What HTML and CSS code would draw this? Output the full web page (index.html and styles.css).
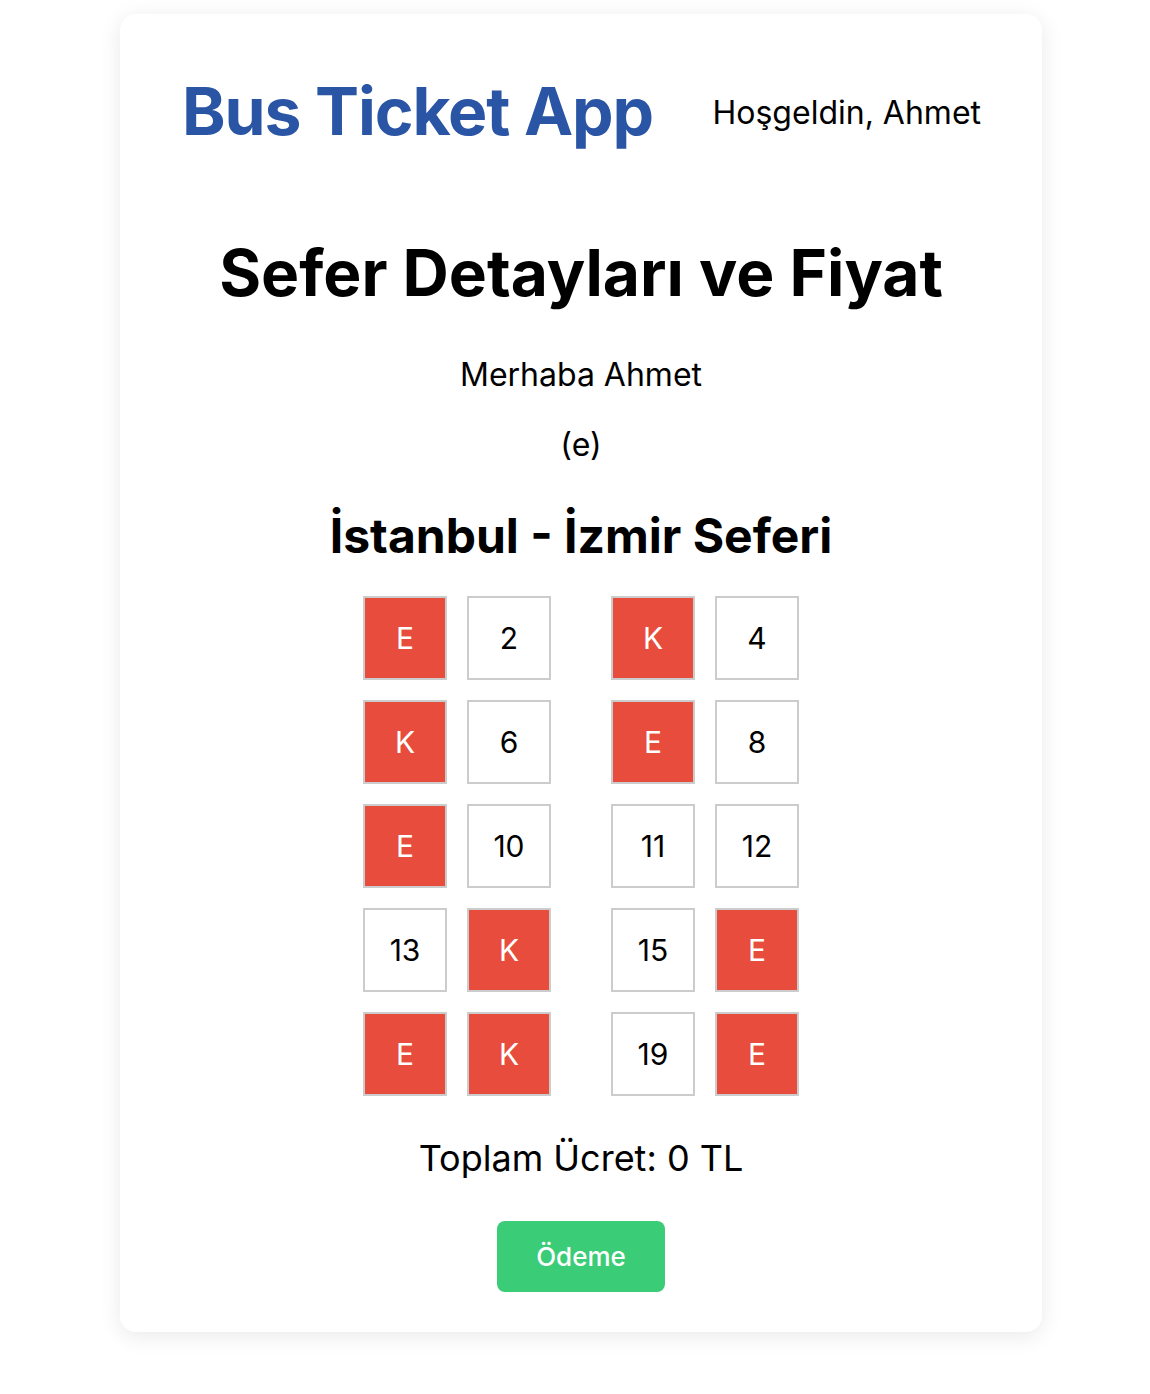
FILE: index.html
```html
<!DOCTYPE html>
<html lang="tr">
<head>
<meta charset="utf-8">
<title>Bus Ticket App</title>
<link rel="stylesheet" href="styles.css">
</head>
<body>
<div class="card">
  <header class="header">
    <h1 class="brand">Bus Ticket App</h1>
    <span class="greeting">Hoşgeldin, Ahmet</span>
  </header>
  <main class="content">
    <h2 class="page-title">Sefer Detayları ve Fiyat</h2>
    <p class="hello">Merhaba Ahmet</p>
    <p class="hello hello-e">(e)</p>
    <h3 class="route">İstanbul - İzmir Seferi</h3>
    <div class="seats">
      <div class="seat-row">
        <div class="seat taken">E</div><div class="seat">2</div><div class="aisle"></div><div class="seat taken">K</div><div class="seat">4</div>
      </div>
      <div class="seat-row">
        <div class="seat taken">K</div><div class="seat">6</div><div class="aisle"></div><div class="seat taken">E</div><div class="seat">8</div>
      </div>
      <div class="seat-row">
        <div class="seat taken">E</div><div class="seat">10</div><div class="aisle"></div><div class="seat">11</div><div class="seat">12</div>
      </div>
      <div class="seat-row">
        <div class="seat">13</div><div class="seat taken">K</div><div class="aisle"></div><div class="seat">15</div><div class="seat taken">E</div>
      </div>
      <div class="seat-row">
        <div class="seat taken">E</div><div class="seat taken">K</div><div class="aisle"></div><div class="seat">19</div><div class="seat taken">E</div>
      </div>
    </div>
    <p class="total">Toplam Ücret: 0 TL</p>
    <button class="pay">Ödeme</button>
  </main>
</div>
</body>
</html>
```

FILE: styles.css
```css
* { box-sizing: border-box; }

body {
  margin: 0;
  padding: 14px 0 40px 12px;
  background: #ffffff;
  font-family: Inter, "Noto Sans", "DejaVu Sans", sans-serif;
  color: #000;
}

.card {
  width: 922px;
  margin: 0 auto;
  background: #fff;
  border-radius: 16px;
  box-shadow: 0 4px 22px rgba(0, 0, 0, 0.09);
  padding: 58px 61px 40px 62px;
}

.header {
  display: flex;
  justify-content: space-between;
  align-items: center;
}

.brand {
  margin: 0;
  font-size: 66px;
  line-height: 1.2;
  font-weight: 700;
  color: #2a55a5;
  letter-spacing: -1.1px;
}

.greeting {
  font-size: 32px;
  line-height: 1.2;
  padding-top: 4px;
}

.content {
  display: flex;
  flex-direction: column;
  align-items: center;
  text-align: center;
  padding-right: 1px;
}

.page-title {
  margin: 84px 0 0;
  font-size: 64px;
  line-height: 1.2;
  font-weight: 700;
}

.hello {
  margin: 44px 0 0;
  font-size: 32px;
  line-height: 1.2;
}

.hello-e {
  margin-top: 32px;
}

.route {
  margin: 42px 0 0;
  font-size: 48px;
  line-height: 1.2;
  font-weight: 700;
}

.seats {
  margin-top: 32px;
  display: flex;
  flex-direction: column;
  gap: 20px;
}

.seat-row {
  display: flex;
  gap: 20px;
}

.aisle { width: 20px; }

.seat {
  width: 84px;
  height: 84px;
  border: 2px solid #cccccc;
  background: #fff;
  display: flex;
  align-items: center;
  justify-content: center;
  font-size: 30px;
}

.seat.taken {
  background: #e74c3c;
  color: #fff;
}

.total {
  margin: 41px 0 0;
  font-size: 36px;
  line-height: 1.2;
}

.pay {
  margin-top: 40px;
  width: 168px;
  height: 71px;
  border: none;
  border-radius: 8px;
  background: #3bcc77;
  color: #fff;
  font-family: Inter, "Noto Sans", sans-serif;
  font-size: 26px;
  font-weight: 500;
}
```
